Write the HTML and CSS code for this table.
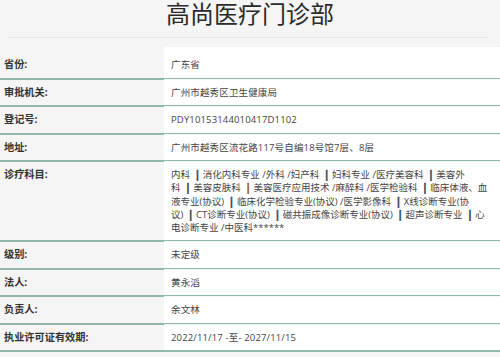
FILE: index.html
```html
<!DOCTYPE html>
<html lang="zh-CN">
<head>
<meta charset="utf-8">
<title>高尚医疗门诊部</title>
<link rel="stylesheet" href="styles.css">
</head>
<body>
<div class="page">
  <header class="head">
    <h1 class="title">高尚医疗门诊部</h1>
  </header>
  <div class="rule"></div>
  <div class="table">
    <div class="row first"><div class="label">省份:</div><div class="value">广东省</div></div>
    <div class="row"><div class="label">审批机关:</div><div class="value">广州市越秀区卫生健康局</div></div>
    <div class="row"><div class="label">登记号:</div><div class="value">PDY10153144010417D1102</div></div>
    <div class="row"><div class="label">地址:</div><div class="value">广州市越秀区流花路117号自编18号馆7层、8层</div></div>
    <div class="row"><div class="label">诊疗科目:</div><div class="value multi">内科 <b class="bar">|</b> 消化内科专业 /外科 /妇产科 <b class="bar">|</b> 妇科专业 /医疗美容科 <b class="bar">|</b> 美容外<br>科 <b class="bar">|</b> 美容皮肤科 <b class="bar alt">|</b> 美容医疗应用技术 /麻醉科 /医学检验科 <b class="bar">|</b> 临床体液、血<br>液专业(协议) <b class="bar">|</b> 临床化学检验专业(协议) /医学影像科 <b class="bar">|</b> X线诊断专业(协<br>议) <b class="bar">|</b> CT诊断专业(协议) <b class="bar">|</b> 磁共振成像诊断专业(协议) <b class="bar">|</b> 超声诊断专业 <b class="bar">|</b> 心<br>电诊断专业 /中医科******</div></div>
    <div class="row"><div class="label">级别:</div><div class="value">未定级</div></div>
    <div class="row"><div class="label">法人:</div><div class="value">黄永滔</div></div>
    <div class="row"><div class="label">负责人:</div><div class="value">余文林</div></div>
    <div class="row"><div class="label">执业许可证有效期:</div><div class="value">2022/11/17 -至- 2027/11/15</div></div>
  </div>
</div>
</body>
</html>
```
FILE: styles.css
```css
html, body {
  margin: 0;
  padding: 0;
  background: #f5f5f5;
}
body {
  font-family: "Open Sans", "Noto Sans CJK SC", sans-serif;
  color: #333;
  width: 500px;
  height: 357px;
  overflow: hidden;
}
.head {
  height: 37px;
  display: flex;
  justify-content: center;
  align-items: flex-start;
}
.title {
  margin: 0;
  padding-top: 1px;
  font-family: "Noto Sans CJK SC", sans-serif;
  font-size: 24px;
  line-height: 24px;
  font-weight: 400;
  color: #2a2a2a;
}
.rule {
  height: 1px;
  background: #e9e9e9;
  margin: 0 12px 0 7px;
}
.table {
  margin-top: 9px;
}
.row {
  display: grid;
  grid-template-columns: 164px 1fr;
  border-bottom: 2px solid #8fb9a6;
  font-size: 9.5px;
  line-height: 13.5px;
}
.label {
  padding: 6px 4px 6px 4px;
  font-size: 10.2px;
  font-weight: 700;
  color: #333;
  background: #f5f5f5;
}
.value {
  padding: 6px 7px 6px 7px;
  background: #fff;
  color: #444;
  letter-spacing: 0.15px;
  border-top: 1px solid #f2f9f8;
  margin-top: -1px;
}
.row.first .label,
.row.first .value {
  padding-top: 11px;
  border-top: 0;
  margin-top: 0;
}
.multi {
  line-height: 13.3px;
  white-space: nowrap;
  letter-spacing: 0;
}
.bar {
  margin: 0 1px 0 3px;
  font-family: "DejaVu Sans", sans-serif;
  font-size: 10.5px;
  font-weight: 700;
  color: #2f4660;
  -webkit-text-stroke: 0.4px #2f4660;
}
.bar.alt {
  color: #9a5b2e;
  -webkit-text-stroke: 0.4px #9a5b2e;
}
```
